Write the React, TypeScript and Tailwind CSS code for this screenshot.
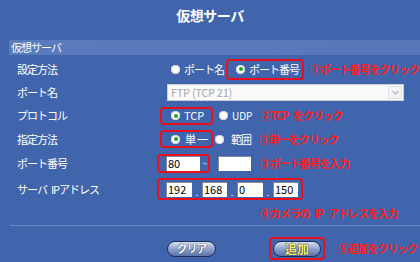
import React from 'react';

function Radio({ checked = false }: { checked?: boolean }) {
    return (
        <span className="flex h-[9px] w-[9px] shrink-0 items-center justify-center rounded-full bg-white shadow-[inset_0_0_0_1px_#c9cfd8]">
            {checked && <span className="h-[4px] w-[4px] rounded-full bg-[#1fa51f]" />}
        </span>
    );
}

function Note({ children, className = '' }: { children: React.ReactNode; className?: string }) {
    return (
        <span className={`shrink-0 whitespace-nowrap text-[11px] font-bold leading-none tracking-[-1.1px] text-[#ff1c1c] ${className}`}>
            {children}
        </span>
    );
}

function Field({ value = '', w }: { value?: string; w: string }) {
    return (
        <span className={`flex h-[15px] ${w} shrink-0 items-center bg-white pl-[2px] text-[11px] leading-none text-black shadow-[inset_1px_1px_0_#7f8aa0]`}>
            {value}
        </span>
    );
}

function Dot() {
    return <span className="flex w-[10px] shrink-0 justify-center pt-[6px] text-[9px] leading-none text-white">.</span>;
}

function Row({ label, h, children }: { label: React.ReactNode; h: string; children: React.ReactNode }) {
    return (
        <div className={`flex ${h} items-center whitespace-nowrap`}>
            <div className="w-[157px] shrink-0 pl-[17px] text-[11px] leading-none tracking-[-1px] text-white">{label}</div>
            <div className="flex shrink-0 items-center">{children}</div>
        </div>
    );
}

export default function App() {
    return (
        <div className="h-[262px] w-[420px] overflow-hidden bg-[#4065ad] font-['Noto_Sans_CJK_JP',sans-serif] text-white">
            {/* Title */}
            <h1 className="pt-[6px] text-center text-[14px] font-bold leading-[18px] tracking-[-0.5px]">仮想サーバ</h1>

            {/* Section bar */}
            <div className="ml-[9px] mt-[16px] flex h-[15px] items-center bg-gradient-to-r from-[#5a7bbd] to-[#5678ba] pl-[2px] text-[11px] leading-none tracking-[-1px]">
                仮想サーバ
            </div>

            <div className="mt-[2px]">
                <Row label="設定方法" h="h-[24px]">
                    <span className="ml-[14px] flex shrink-0 items-center gap-[4px]">
                        <Radio />
                        <span className="text-[11px] leading-none tracking-[-1px]">ポート名</span>
                    </span>
                    <span className="ml-[2px] flex h-[21px] shrink-0 items-center gap-[4px] rounded-[4px] border-2 border-[#e8101c] pl-[8px] pr-[3px]">
                        <Radio checked />
                        <span className="text-[11px] leading-none tracking-[-1px]">ポート番号</span>
                    </span>
                    <Note className="ml-[6px]">①ポート番号をクリック</Note>
                </Row>

                <Row label="ポート名" h="h-[23px]">
                    <div className="ml-[10px] flex h-[17px] w-[237px] items-center justify-between border border-[#c9ced6] bg-[#fafafa]">
                        <span className="pl-[3px] text-[11px] leading-none tracking-[-0.3px] text-[#a3a7ad]">FTP (TCP 21)</span>
                        <span className="mr-[1px] flex h-[13px] w-[14px] items-center justify-center border border-[#dfe2e6] bg-[#f3f4f6]">
                            <svg width="7" height="5" viewBox="0 0 7 5">
                                <path d="M0.5 1 L3.5 4 L6.5 1" fill="none" stroke="#b9bec6" strokeWidth="1.3" />
                            </svg>
                        </span>
                    </div>
                </Row>

                <Row label="プロトコル" h="h-[23px]">
                    <span className="ml-[3px] flex h-[18px] w-[53px] shrink-0 items-center gap-[4px] rounded-[4px] border-2 border-[#e8101c] pl-[9px]">
                        <Radio checked />
                        <span className="text-[11px] leading-none">TCP</span>
                    </span>
                    <span className="ml-[6px] flex shrink-0 items-center gap-[4px]">
                        <Radio />
                        <span className="text-[10px] leading-none">UDP</span>
                    </span>
                    <Note className="ml-[8px]">
                        ②TCP<span className="ml-[5px]">をクリック</span>
                    </Note>
                </Row>

                <Row label="指定方法" h="h-[24px]">
                    <span className="ml-[3px] flex h-[18px] w-[53px] shrink-0 items-center gap-[5px] rounded-[4px] border-2 border-[#e8101c] pl-[9px]">
                        <Radio checked />
                        <span className="text-[11px] leading-none tracking-[1px]">単一</span>
                    </span>
                    <span className="ml-[2px] flex shrink-0 items-center gap-[7px]">
                        <Radio />
                        <span className="text-[11px] leading-none tracking-[-1px]">範囲</span>
                    </span>
                    <Note className="ml-[8px]">③単一をクリック</Note>
                </Row>

                <Row label="ポート番号" h="h-[24px]">
                    <span className="flex h-[19px] w-[53px] shrink-0 items-center rounded-[4px] border-2 border-[#e8101c] pl-[7px]">
                        <Field value="80" w="w-[34px]" />
                        <span className="ml-[2px] text-[9px] leading-none text-[#dfe6f4]">~</span>
                    </span>
                    <span className="ml-[8px] shrink-0">
                        <Field w="w-[33px]" />
                    </span>
                    <Note className="ml-[9px]">③ポート番号を入力</Note>
                </Row>

                <Row
                    label={
                        <span>
                            サーバ<span className="ml-[4px]">IPアドレス</span>
                        </span>
                    }
                    h="h-[28px]"
                >
                    <span className="flex h-[22px] shrink-0 items-center rounded-[4px] border-2 border-[#e8101c] pl-[7px] pr-[3px]">
                        <Field value="192" w="w-[26px]" />
                        <Dot />
                        <Field value="168" w="w-[25px]" />
                        <Dot />
                        <Field value="0" w="w-[26px]" />
                        <Dot />
                        <Field value="150" w="w-[25px]" />
                    </span>
                </Row>

                <div className="flex h-[20px] items-center pl-[260px]">
                    <Note>
                        ④カメラの<span className="ml-[5px]">IP</span>
                        <span className="ml-[5px]">アドレスを入力</span>
                    </Note>
                </div>
            </div>

            {/* Divider */}
            <div className="ml-[10px] mt-[2px] h-px bg-[#6b8bc8]" />

            {/* Buttons */}
            <div className="mt-[11px] flex items-center whitespace-nowrap">
                <button className="ml-[167px] flex h-[16px] w-[49px] shrink-0 items-center justify-center rounded-full border border-[#1b2c58] bg-gradient-to-b from-[#d7e0f0] via-[#8ea3cc] to-[#5b73a8] text-[11px] font-bold leading-none tracking-[-1px] text-white [text-shadow:0_0_1px_#1b2c58,0_0_1px_#1b2c58]">
                    クリア
                </button>
                <span className="ml-[53px] flex h-[23px] shrink-0 items-center rounded-[4px] border-2 border-[#e8101c] px-[2px]">
                    <button className="flex h-[16px] w-[48px] items-center justify-center rounded-full border border-[#1b2c58] bg-gradient-to-b from-[#d7e0f0] via-[#8ea3cc] to-[#5b73a8] text-[12px] font-bold leading-none text-[#f6ef6a] [text-shadow:0_0_1px_#1b2c58,0_0_1px_#1b2c58]">
                        追加
                    </button>
                </span>
                <Note className="ml-[13px]">⑤追加をクリック</Note>
            </div>
        </div>
    );
}
